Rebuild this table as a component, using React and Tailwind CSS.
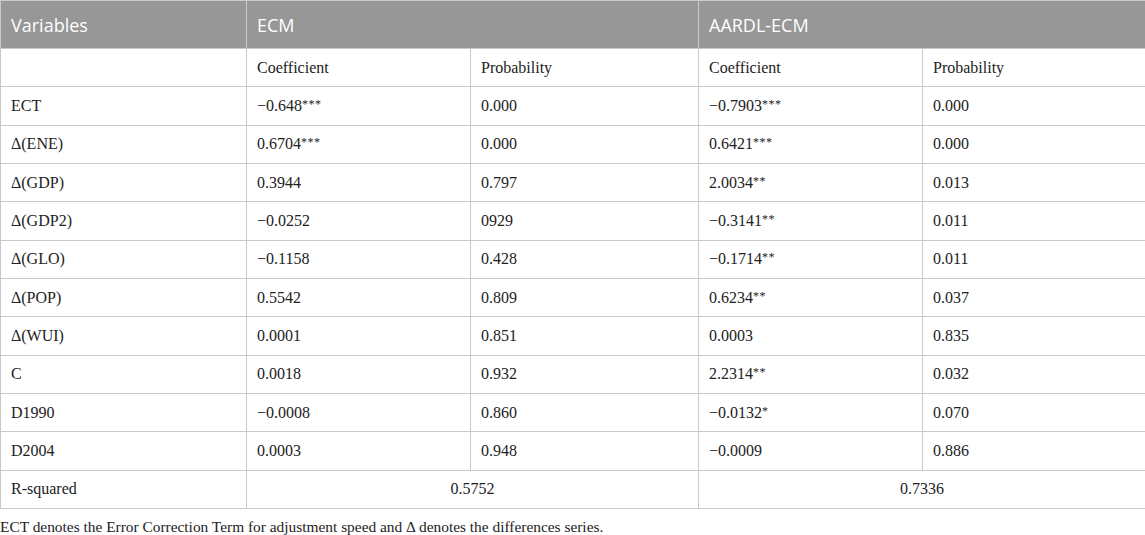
const rows = [
  ["ECT", "−0.648", "***", "0.000", "−0.7903", "***", "0.000"],
  ["Δ(ENE)", "0.6704", "***", "0.000", "0.6421", "***", "0.000"],
  ["Δ(GDP)", "0.3944", "", "0.797", "2.0034", "**", "0.013"],
  ["Δ(GDP2)", "−0.0252", "", "0929", "−0.3141", "**", "0.011"],
  ["Δ(GLO)", "−0.1158", "", "0.428", "−0.1714", "**", "0.011"],
  ["Δ(POP)", "0.5542", "", "0.809", "0.6234", "**", "0.037"],
  ["Δ(WUI)", "0.0001", "", "0.851", "0.0003", "", "0.835"],
  ["C", "0.0018", "", "0.932", "2.2314", "**", "0.032"],
  ["D1990", "−0.0008", "", "0.860", "−0.0132", "*", "0.070"],
  ["D2004", "0.0003", "", "0.948", "−0.0009", "", "0.886"],
];

const Stars = ({ s }) =>
  s ? <span className="text-[12px] relative -top-[3px] tracking-[0.5px]">{s}</span> : null;

const td = "border border-[#c9c9c9] h-[38.33px] pl-[10px] align-middle";
const th = "border border-[#c9c9c9] h-[48px] pl-[10px] align-middle text-left font-normal";

export default function App() {
  return (
    <div className="w-[1145px] bg-white text-[#222] font-['Liberation_Serif',serif]">
      <table className="table-fixed border-collapse w-[1145px] text-[16px]">
        <colgroup>
          <col className="w-[246px]" />
          <col className="w-[224px]" />
          <col className="w-[228px]" />
          <col className="w-[224px]" />
          <col className="w-[223px]" />
        </colgroup>
        <thead>
          <tr className="bg-[#979797] text-white font-['Open_Sans',sans-serif] text-[18px]">
            <th className={th + " pt-[2px]"}>Variables</th>
            <th className={th + " pt-[2px]"} colSpan={2}>ECM</th>
            <th className={th + " pt-[2px]"} colSpan={2}>AARDL-ECM</th>
          </tr>
        </thead>
        <tbody>
          <tr>
            <td className={td}></td>
            <td className={td}>Coefficient</td>
            <td className={td}>Probability</td>
            <td className={td}>Coefficient</td>
            <td className={td}>Probability</td>
          </tr>
          {rows.map((r) => (
            <tr key={r[0]}>
              <td className={td}>{r[0]}</td>
              <td className={td}>
                {r[1]}
                <Stars s={r[2]} />
              </td>
              <td className={td}>{r[3]}</td>
              <td className={td}>
                {r[4]}
                <Stars s={r[5]} />
              </td>
              <td className={td}>{r[6]}</td>
            </tr>
          ))}
          <tr>
            <td className={td}>R-squared</td>
            <td className={td + " text-center !pl-0"} colSpan={2}>0.5752</td>
            <td className={td + " text-center !pl-0"} colSpan={2}>0.7336</td>
          </tr>
        </tbody>
      </table>
      <p className="mt-[8px] text-[15.4px] leading-[20px]">
        ECT denotes the Error Correction Term for adjustment speed and Δ denotes the differences series.
      </p>
    </div>
  );
}
